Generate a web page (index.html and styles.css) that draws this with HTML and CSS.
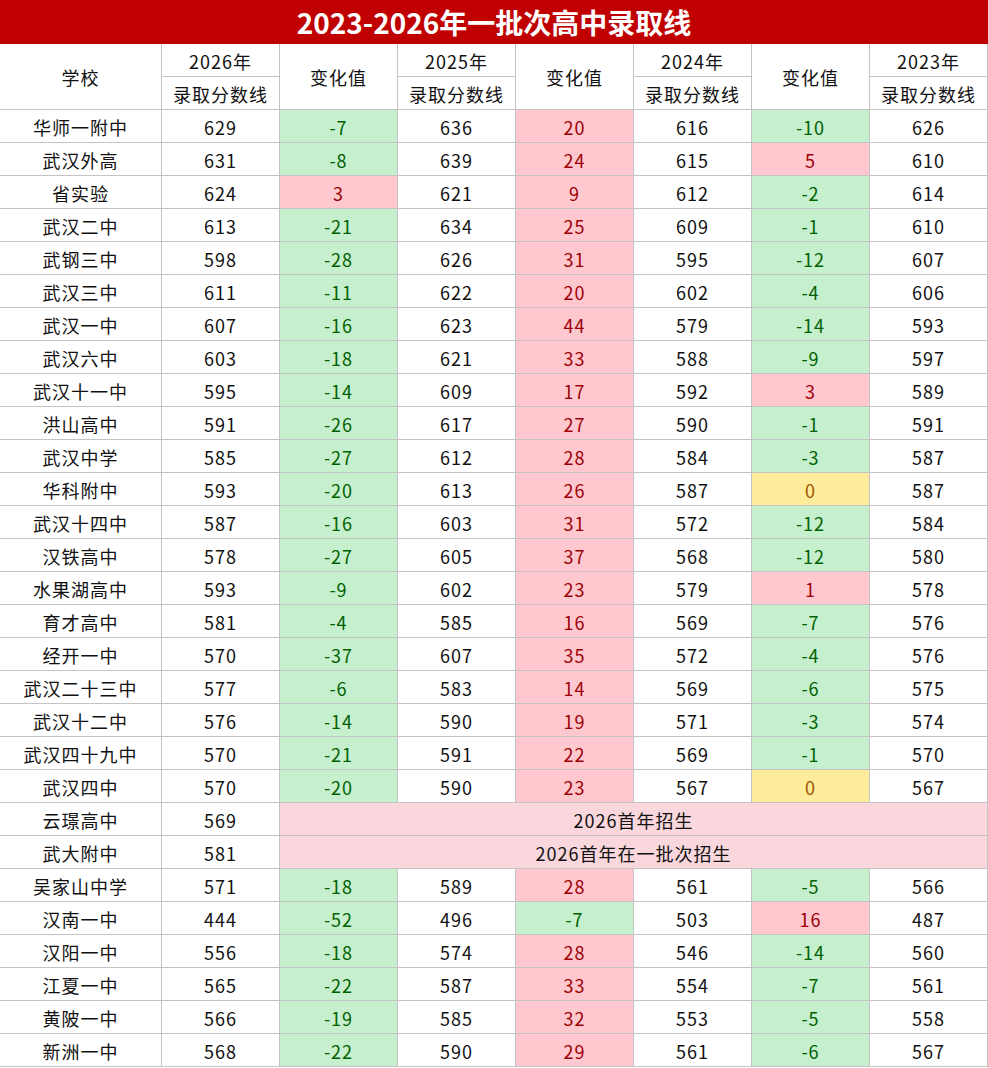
FILE: index.html
```html
<!DOCTYPE html>
<html lang="zh-CN">
<head>
<meta charset="utf-8">
<title>2023-2026年一批次高中录取线</title>
<link rel="stylesheet" href="styles.css">
</head>
<body>
<div class="sheet">
  <div class="title">2023-2026年一批次高中录取线</div>
  <div class="grid">
    <div class="c h tall">学校</div><div class="c h">2026年</div><div class="c h tall">变化值</div><div class="c h">2025年</div><div class="c h tall">变化值</div><div class="c h">2024年</div><div class="c h tall">变化值</div><div class="c h">2023年</div>
    <div class="c h">录取分数线</div><div class="c h">录取分数线</div><div class="c h">录取分数线</div><div class="c h">录取分数线</div>

    <div class="c">华师一附中</div><div class="c">629</div><div class="c g">-7</div><div class="c">636</div><div class="c r">20</div><div class="c">616</div><div class="c g">-10</div><div class="c">626</div>
    <div class="c">武汉外高</div><div class="c">631</div><div class="c g">-8</div><div class="c">639</div><div class="c r">24</div><div class="c">615</div><div class="c r">5</div><div class="c">610</div>
    <div class="c">省实验</div><div class="c">624</div><div class="c r">3</div><div class="c">621</div><div class="c r">9</div><div class="c">612</div><div class="c g">-2</div><div class="c">614</div>
    <div class="c">武汉二中</div><div class="c">613</div><div class="c g">-21</div><div class="c">634</div><div class="c r">25</div><div class="c">609</div><div class="c g">-1</div><div class="c">610</div>
    <div class="c">武钢三中</div><div class="c">598</div><div class="c g">-28</div><div class="c">626</div><div class="c r">31</div><div class="c">595</div><div class="c g">-12</div><div class="c">607</div>
    <div class="c">武汉三中</div><div class="c">611</div><div class="c g">-11</div><div class="c">622</div><div class="c r">20</div><div class="c">602</div><div class="c g">-4</div><div class="c">606</div>
    <div class="c">武汉一中</div><div class="c">607</div><div class="c g">-16</div><div class="c">623</div><div class="c r">44</div><div class="c">579</div><div class="c g">-14</div><div class="c">593</div>
    <div class="c">武汉六中</div><div class="c">603</div><div class="c g">-18</div><div class="c">621</div><div class="c r">33</div><div class="c">588</div><div class="c g">-9</div><div class="c">597</div>
    <div class="c">武汉十一中</div><div class="c">595</div><div class="c g">-14</div><div class="c">609</div><div class="c r">17</div><div class="c">592</div><div class="c r">3</div><div class="c">589</div>
    <div class="c">洪山高中</div><div class="c">591</div><div class="c g">-26</div><div class="c">617</div><div class="c r">27</div><div class="c">590</div><div class="c g">-1</div><div class="c">591</div>
    <div class="c">武汉中学</div><div class="c">585</div><div class="c g">-27</div><div class="c">612</div><div class="c r">28</div><div class="c">584</div><div class="c g">-3</div><div class="c">587</div>
    <div class="c">华科附中</div><div class="c">593</div><div class="c g">-20</div><div class="c">613</div><div class="c r">26</div><div class="c">587</div><div class="c y">0</div><div class="c">587</div>
    <div class="c">武汉十四中</div><div class="c">587</div><div class="c g">-16</div><div class="c">603</div><div class="c r">31</div><div class="c">572</div><div class="c g">-12</div><div class="c">584</div>
    <div class="c">汉铁高中</div><div class="c">578</div><div class="c g">-27</div><div class="c">605</div><div class="c r">37</div><div class="c">568</div><div class="c g">-12</div><div class="c">580</div>
    <div class="c">水果湖高中</div><div class="c">593</div><div class="c g">-9</div><div class="c">602</div><div class="c r">23</div><div class="c">579</div><div class="c r">1</div><div class="c">578</div>
    <div class="c">育才高中</div><div class="c">581</div><div class="c g">-4</div><div class="c">585</div><div class="c r">16</div><div class="c">569</div><div class="c g">-7</div><div class="c">576</div>
    <div class="c">经开一中</div><div class="c">570</div><div class="c g">-37</div><div class="c">607</div><div class="c r">35</div><div class="c">572</div><div class="c g">-4</div><div class="c">576</div>
    <div class="c">武汉二十三中</div><div class="c">577</div><div class="c g">-6</div><div class="c">583</div><div class="c r">14</div><div class="c">569</div><div class="c g">-6</div><div class="c">575</div>
    <div class="c">武汉十二中</div><div class="c">576</div><div class="c g">-14</div><div class="c">590</div><div class="c r">19</div><div class="c">571</div><div class="c g">-3</div><div class="c">574</div>
    <div class="c">武汉四十九中</div><div class="c">570</div><div class="c g">-21</div><div class="c">591</div><div class="c r">22</div><div class="c">569</div><div class="c g">-1</div><div class="c">570</div>
    <div class="c">武汉四中</div><div class="c">570</div><div class="c g">-20</div><div class="c">590</div><div class="c r">23</div><div class="c">567</div><div class="c y">0</div><div class="c">567</div>
    <div class="c">云璟高中</div><div class="c">569</div><div class="c m wide">2026首年招生</div>
    <div class="c">武大附中</div><div class="c">581</div><div class="c m wide">2026首年在一批次招生</div>
    <div class="c">吴家山中学</div><div class="c">571</div><div class="c g">-18</div><div class="c">589</div><div class="c r">28</div><div class="c">561</div><div class="c g">-5</div><div class="c">566</div>
    <div class="c">汉南一中</div><div class="c">444</div><div class="c g">-52</div><div class="c">496</div><div class="c g">-7</div><div class="c">503</div><div class="c r">16</div><div class="c">487</div>
    <div class="c">汉阳一中</div><div class="c">556</div><div class="c g">-18</div><div class="c">574</div><div class="c r">28</div><div class="c">546</div><div class="c g">-14</div><div class="c">560</div>
    <div class="c">江夏一中</div><div class="c">565</div><div class="c g">-22</div><div class="c">587</div><div class="c r">33</div><div class="c">554</div><div class="c g">-7</div><div class="c">561</div>
    <div class="c">黄陂一中</div><div class="c">566</div><div class="c g">-19</div><div class="c">585</div><div class="c r">32</div><div class="c">553</div><div class="c g">-5</div><div class="c">558</div>
    <div class="c">新洲一中</div><div class="c">568</div><div class="c g">-22</div><div class="c">590</div><div class="c r">29</div><div class="c">561</div><div class="c g">-6</div><div class="c">567</div>
  </div>
</div>
</body>
</html>
```
FILE: styles.css
```css
html, body {
  margin: 0;
  padding: 0;
  background: #ffffff;
}
body {
  font-family: "Noto Sans CJK SC", "Noto Sans", sans-serif;
  color: #111111;
}
.sheet {
  width: 988px;
}
.title {
  height: 44px;
  background: #c00000;
  color: #ffffff;
  font-size: 28px;
  font-weight: 700;
  letter-spacing: 0;
  display: flex;
  align-items: center;
  justify-content: center;
}
.grid {
  display: grid;
  grid-template-columns: 162px repeat(7, 118px);
  grid-auto-rows: 33px;
}
.c {
  box-sizing: border-box;
  border-right: 1px solid #c4c4c4;
  border-bottom: 1px solid #c4c4c4;
  display: flex;
  align-items: center;
  justify-content: center;
  font-size: 18px;
  letter-spacing: 1px;
  line-height: 1;
  padding-top: 1px;
}
.tall {
  grid-row: span 2;
}
.wide {
  grid-column: span 6;
}
.g {
  background: #c6efce;
  color: #006100;
}
.r {
  background: #ffc7ce;
  color: #9c0006;
}
.y {
  background: #ffeb9c;
  color: #9c5700;
}
.m {
  background: #f9d7dc;
  color: #111111;
}
```
